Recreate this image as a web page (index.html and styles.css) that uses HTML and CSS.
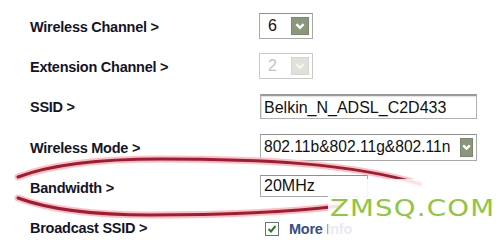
FILE: index.html
```html
<!DOCTYPE html>
<html lang="en">
<head>
  <meta charset="UTF-8" />
  <title>Wireless Settings</title>
  <link rel="stylesheet" href="styles.css">
</head>
<body>
  <div class="page">
    <div class="settings">
      <div class="label">Wireless Channel &gt;</div>
      <div class="field">
        <div class="select small">
          <span>6</span>
          <span class="arrow"><svg viewBox="0 0 10 10"><path d="M2 3.5 L5 6.5 L8 3.5" /></svg></span>
        </div>
      </div>

      <div class="label">Extension Channel &gt;</div>
      <div class="field">
        <div class="select small disabled">
          <span>2</span>
          <span class="arrow"><svg viewBox="0 0 10 10"><path d="M2 3.5 L5 6.5 L8 3.5" /></svg></span>
        </div>
      </div>

      <div class="label">SSID &gt;</div>
      <div class="field">
        <div class="textbox">Belkin_N_ADSL_C2D433</div>
      </div>

      <div class="label">Wireless Mode &gt;</div>
      <div class="field">
        <div class="select wide">
          <span>802.11b&amp;802.11g&amp;802.11n</span>
          <span class="arrow thin"><svg viewBox="0 0 10 10"><path d="M2 3.5 L5 6.5 L8 3.5" /></svg></span>
        </div>
      </div>

      <div class="label">Bandwidth &gt;</div>
      <div class="field">
        <div class="select band"><span>20MHz</span></div>
      </div>

      <div class="label">Broadcast SSID &gt;</div>
      <div class="field check-row">
        <span class="checkbox"><svg viewBox="0 0 12 12"><path d="M2.5 6 L5 8.5 L9.5 3" /></svg></span>
        <span class="more">More Info</span>
      </div>
    </div>

    <!-- hand drawn circle round the bandwidth row -->
    <svg class="circle" viewBox="0 0 500 240">
      <path class="halo" d="M18 177 C50 165 100 159 160 159 C260 159 350 163 420 184" />
      <path class="halo" d="M18 198 C45 208 90 215 150 215 C220 215 280 213 340 206" />
      <path class="ink" d="M18 177 C50 165 100 159 160 159 C260 159 350 163 420 184" />
      <path class="ink" d="M18 198 C45 208 90 215 150 215 C220 215 280 213 340 206" />
    </svg>

    <div class="watermark"><span>ZMSQ.COM</span></div>
  </div>
</body>
</html>
```

FILE: styles.css
```css
body {
  margin: 0;
  background: #fff;
  font-family: 'Liberation Sans', Arial, sans-serif;
}

.page {
  position: relative;
  width: 500px;
  height: 240px;
  overflow: hidden;
}

.settings {
  display: grid;
  grid-template-columns: 229px 1fr;
  grid-auto-rows: 40.3px;
  align-items: center;
  padding: 6px 0 0 30px;
}

.label {
  font-size: 14.5px;
  font-weight: bold;
  letter-spacing: -0.25px;
  color: #141428;
  padding-top: 1px;
}

.field {
  display: flex;
  align-items: center;
}

.select {
  display: flex;
  align-items: center;
  justify-content: space-between;
  box-sizing: border-box;
  border: 1px solid #a9a9a9;
  border-top-color: #8f8f8f;
  background: #fff;
  font-size: 16px;
  color: #111;
}

.select.small {
  width: 54px;
  height: 26px;
  padding: 0 3px 0 8px;
}

.select.wide {
  width: 217px;
  height: 27px;
  margin-left: 1px;
  padding: 0 3px 0 3px;
  font-size: 15.6px;
}

.select.band {
  width: 108px;
  height: 22px;
  margin-left: 1px;
  padding-left: 3px;
  margin-top: -2px;
}

.arrow {
  display: flex;
  align-items: center;
  justify-content: center;
  width: 18px;
  height: 18px;
  background: #8b977b;
  border: 1px solid #7c8870;
  box-sizing: border-box;
}

.arrow.thin {
  width: 13px;
  height: 19px;
}

.arrow svg {
  width: 12px;
  height: 12px;
}

.arrow path {
  fill: none;
  stroke: #fff;
  stroke-width: 2;
}

.disabled {
  color: #c3c3bb;
  border-color: #c9c9c9;
}

.disabled .arrow {
  background: #dfe2da;
  border-color: #d4d7cf;
}

.disabled .arrow path {
  stroke: #f6f6f2;
}

.textbox {
  box-sizing: border-box;
  width: 217px;
  height: 25px;
  margin-left: 1px;
  padding: 3px 0 0 3px;
  border: 1px solid #b0b0b0;
  border-top: 2px solid #9a9a9a;
  font-size: 16px;
  color: #111;
  box-shadow: inset 1px 1px 1px #e2e2e2;
}

.check-row {
  gap: 10px;
  padding-left: 6px;
  padding-top: 2px;
}

.checkbox {
  display: flex;
  width: 14px;
  height: 14px;
  box-sizing: border-box;
  border: 1px solid #6a7280;
  background: #fff;
}

.checkbox svg {
  width: 12px;
  height: 12px;
}

.checkbox path {
  fill: none;
  stroke: #2c7a2c;
  stroke-width: 2;
}

.more {
  font-size: 14.5px;
  font-weight: bold;
  letter-spacing: -0.25px;
  color: #35508a;
}

.circle {
  position: absolute;
  top: 0;
  left: 0;
  width: 500px;
  height: 240px;
}

.circle path {
  fill: none;
  stroke-linecap: round;
}

.circle .halo {
  stroke: #f3c3c8;
  stroke-width: 7;
}

.circle .ink {
  stroke: #a8182f;
  stroke-width: 3;
}

.watermark {
  position: absolute;
  left: 328px;
  top: 179px;
  width: 172px;
  height: 61px;
  background: rgba(255, 255, 255, 0.88);
  box-sizing: border-box;
  padding: 15px 0 0 2px;
  font-family: 'DejaVu Sans', sans-serif;
  font-size: 23px;
  line-height: 28px;
  letter-spacing: 1px;
  color: #8fc640;
}

.watermark span {
  display: inline-block;
  transform: scaleX(1.2);
  transform-origin: left center;
}
```
